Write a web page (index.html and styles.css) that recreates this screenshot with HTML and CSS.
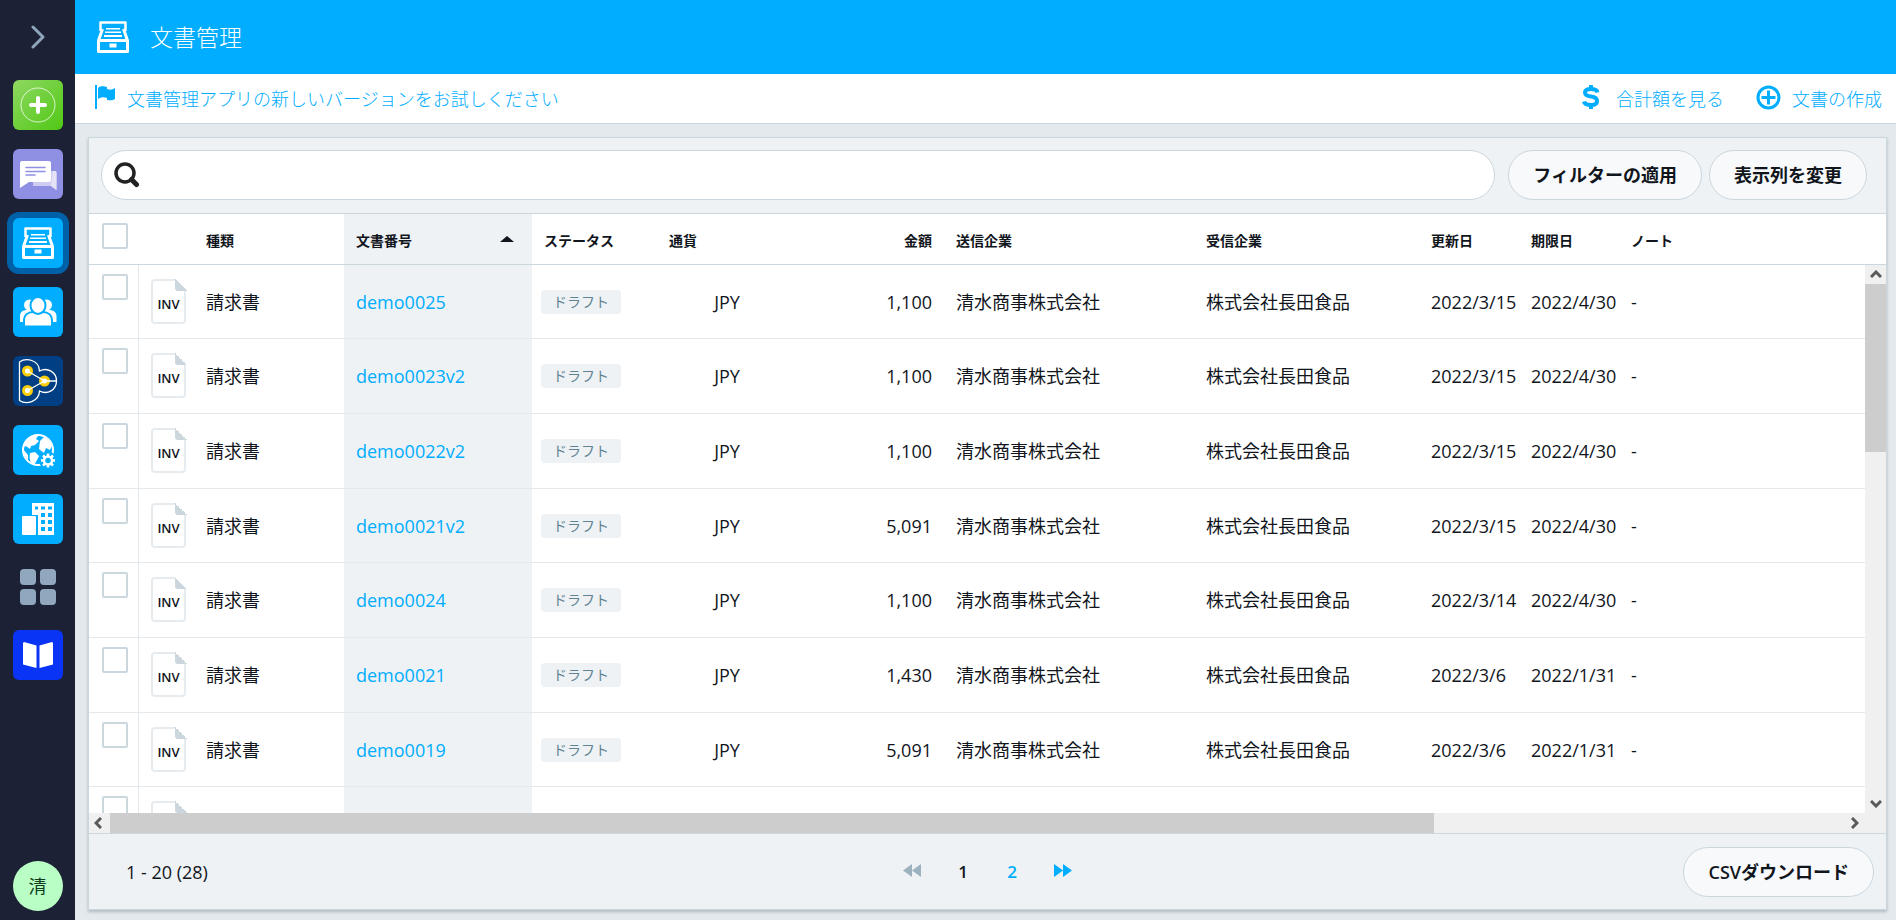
FILE: index.html
```html
<!DOCTYPE html>
<html lang="ja">
<head>
<meta charset="utf-8">
<title>文書管理</title>
<link rel="stylesheet" href="styles.css">
</head>
<body>
<svg class="defs" aria-hidden="true">
  <symbol id="drawer" viewBox="0 0 32 32">
    <path d="M3.500 10V1.500h25V10" fill="none" stroke="currentColor" stroke-width="2.500" stroke-linejoin="round"/>
    <path d="M1.500 19.500h29v11h-29zM1.500 19.500L5.500 8M30.500 19.500L26.500 8" fill="none" stroke="currentColor" stroke-width="3" stroke-linejoin="round"/>
    <path d="M9 7h14v1.500H9zM8 10.500h16V12H8zM7 14h18v2H7zM12.500 22.500h7v4h-7z" fill="currentColor"/>
  </symbol>
</svg>
<div class="app">
  <nav class="sidebar" aria-label="アプリ">
    <button class="expand" aria-label="メニューを開く"><svg width="16" height="24" viewBox="0 0 16 24"><path d="M3 2l10 10L3 22" fill="none" stroke="#8fa5bc" stroke-width="3" stroke-linecap="round" stroke-linejoin="round"/></svg></button>
    <a href="#" class="tile tile-create" aria-label="作成"><svg width="50" height="50" viewBox="0 0 50 50"><circle cx="25" cy="25" r="17" fill="none" stroke="#fff" stroke-opacity=".75"/><path d="M25 18v14M18 25h14" stroke="#fff" stroke-width="4" stroke-linecap="round"/></svg></a>
    <a href="#" class="tile tile-chat" aria-label="メッセージ"><svg width="50" height="50" viewBox="0 0 50 50"><path d="M20 22h22a1.500 1.500 0 0 1 1.500 1.500V41L38 37H20z" fill="#cfcdf1"/><path d="M40 22h2a1.500 1.500 0 0 1 1.500 1.500V41L38 37z" fill="#e6e3f7"/><path d="M9 12h27a2 2 0 0 1 2 2v17a2 2 0 0 1-2 2H16L7 39V14a2 2 0 0 1 2-2z" fill="#fff"/><path d="M13 18.500h19M13 22.500h19M13 26h9" stroke="#8f8fe3" stroke-width="1.500" stroke-linecap="round"/></svg></a>
    <a href="#" class="tile tile-blue tile-active" aria-label="文書管理" aria-current="page"><svg width="32" height="32"><use href="#drawer"/></svg></a>
    <a href="#" class="tile tile-blue" aria-label="ネットワーク"><svg width="50" height="50" viewBox="0 0 50 50"><g fill="#fff"><circle cx="16.500" cy="18" r="5.500"/><circle cx="33.500" cy="18" r="5.500"/><path d="M7 35v-6c0-4 3-6 7-6h22c4 0 7.500 2 7.500 6v6z"/></g><g fill="#fff" stroke="#00adff" stroke-width="2"><path d="M12 39.500c-1 0-1-1-1-2V34c0-6 4-9 9-9h10c5 0 9 3 9 9v3.500c0 1 0 2-1 2z"/><ellipse cx="25" cy="18.500" rx="7.500" ry="8.500"/></g></svg></a>
    <a href="#" class="tile tile-navy" aria-label="パートナー"><svg width="50" height="50" viewBox="0 0 50 50"><path d="M6.500 44.500V6C13 1.500 26 3.500 26.500 15c8-4 17 1 17 10s-9 14-17 10C26 46 13 49 6.500 44.500z" fill="none" stroke="#fff" stroke-width="1.300"/><g fill="#fff" stroke="#f9cf0b" stroke-width="3"><circle cx="14.500" cy="15" r="4"/><circle cx="14.500" cy="34.500" r="4"/><circle cx="31.500" cy="25" r="4"/></g><path d="M14.500 15L31.500 25l-17 9.500M31.500 25h12" fill="none" stroke="#fff" stroke-width="1.300"/></svg></a>
    <a href="#" class="tile tile-blue" aria-label="グローバル設定"><svg width="50" height="50" viewBox="0 0 50 50"><circle cx="25" cy="25" r="15" fill="none" stroke="#fff" stroke-width="2"/><path d="M10 22c1-6 6-11 12-12l3 1-2 3 3 2-4 4-4 1-1 3-4-3-2 1zM27 16l4-4c4 1 7 5 8 9l-2 4-4-2-2 5-5-4zM17 28l5-1 4 4-2 4-3 5c-4-2-5-6-4-12zM10 24l5 6v5c-3-3-5-6-5-11z" fill="#fff"/><circle cx="35" cy="35.500" r="9" fill="#00adff"/><g stroke="#fff"><circle cx="35" cy="35.500" r="4" fill="none" stroke-width="2.500"/><path d="M35 28.500v3M35 39.500v3M28 35.500h3M39 35.500h3M30 30.500l2 2M38 38.500l2 2M40 30.500l-2 2M32 38.500l-2 2" stroke-width="2.500"/></g></svg></a>
    <a href="#" class="tile tile-blue" aria-label="会社"><svg width="50" height="50" viewBox="0 0 50 50"><path d="M19 9h22v32H25V21h-6z" fill="#fff"/><rect x="9" y="22" width="14" height="19" rx="1" fill="#fff"/><path d="M22 12.500h3v3h-3zM28 12.500h4v3h-4zM35 12.500h4v3h-4zM28 19h4v4h-4zM35 19h4v4h-4zM28 26h4v4h-4zM35 26h4v4h-4zM28 33h4v4h-4zM35 33h4v4h-4z" fill="#00adff"/></svg></a>
    <a href="#" class="tile tile-apps" aria-label="すべてのアプリ"><svg width="36" height="36" viewBox="0 0 36 36" fill="#91a7bd"><rect width="16" height="16" rx="4"/><rect x="20" width="16" height="16" rx="4"/><rect y="20" width="16" height="16" rx="4"/><rect x="20" y="20" width="16" height="16" rx="4"/></svg></a>
    <a href="#" class="tile tile-book" aria-label="ガイド"><svg width="50" height="50" viewBox="0 0 50 50" fill="#fff"><path d="M11 12l12.500 3.500V38L10 34.500V13zM39 12l-12.500 3.500V38L40 34.500V13z"/></svg></a>
    <a href="#" class="avatar">清</a>
  </nav>

  <div class="main">
    <header class="titlebar">
      <svg width="32" height="32" aria-hidden="true"><use href="#drawer"/></svg>
      <h1>文書管理</h1>
    </header>

    <div class="actions">
      <a href="#" class="action action-flag"><svg width="22" height="26" viewBox="0 0 22 26" fill="currentColor"><path d="M1 1h2v24H1zM4 4c4-3 6-1 9-1v2c3 1 5 1 8-1v11c-3 2-5 1-8 1v-2c-3-1-6-1-9 1z"/></svg>文書管理アプリの新しいバージョンをお試しください</a>
      <a href="#" class="action action-total"><svg width="18" height="26" viewBox="0 0 18 26" fill="none" stroke="currentColor" stroke-width="4"><path d="M15.500 8.500C15 6 13 5 9 5S3 6 3 8.500 5 12 9 12.500s6 2 6 4.500-2 4-6 4-6.500-1-7-3.500M9 1v4M9 21v4"/></svg>合計額を見る</a>
      <a href="#" class="action"><svg width="25" height="25" viewBox="0 0 25 25" fill="none" stroke="currentColor" stroke-width="3"><circle cx="12.500" cy="12.500" r="10.500"/><path d="M12.500 5.500v14M5.500 12.500h14"/></svg>文書の作成</a>
    </div>

    <main class="content">
      <section class="card">
        <div class="filters">
          <label class="search">
            <svg width="26" height="26" viewBox="0 0 26 26" fill="none" stroke="#222" aria-hidden="true"><circle cx="11" cy="11" r="9" stroke-width="3.500"/><path d="M17.500 17.500l5 5" stroke-width="5" stroke-linecap="round"/></svg>
            <input type="search" aria-label="検索">
          </label>
          <div class="filter-buttons">
            <button class="pill">フィルターの適用</button>
            <button class="pill">表示列を変更</button>
          </div>
        </div>

        <div class="grid">
          <div class="table-wrap">
            <table>
              <colgroup><col class="c-check"><col class="c-icon"><col class="c-type"><col class="c-number"><col class="c-status"><col class="c-currency"><col class="c-amount"><col class="c-sender"><col class="c-receiver"><col class="c-date"><col class="c-date"><col></colgroup>
              <thead>
                <tr><th class="check"><input type="checkbox" aria-label="すべて選択"></th><th></th><th>種類</th><th class="sorted" aria-sort="ascending"><span class="sort">文書番号<i></i></span></th><th>ステータス</th><th>通貨</th><th class="amount">金額</th><th>送信企業</th><th>受信企業</th><th>更新日</th><th>期限日</th><th>ノート</th></tr>
              </thead>
              <tbody>
                <tr><td class="check"><input type="checkbox" aria-label="demo0025"></td><td class="icon"><span class="doc">INV</span></td><td>請求書</td><td class="sorted"><a href="#">demo0025</a></td><td class="status"><span class="badge">ドラフト</span></td><td class="currency">JPY</td><td class="amount">1,100</td><td>清水商事株式会社</td><td>株式会社長田食品</td><td>2022/3/15</td><td>2022/4/30</td><td>-</td></tr>
                <tr><td class="check"><input type="checkbox" aria-label="demo0023v2"></td><td class="icon"><span class="doc">INV</span></td><td>請求書</td><td class="sorted"><a href="#">demo0023v2</a></td><td class="status"><span class="badge">ドラフト</span></td><td class="currency">JPY</td><td class="amount">1,100</td><td>清水商事株式会社</td><td>株式会社長田食品</td><td>2022/3/15</td><td>2022/4/30</td><td>-</td></tr>
                <tr><td class="check"><input type="checkbox" aria-label="demo0022v2"></td><td class="icon"><span class="doc">INV</span></td><td>請求書</td><td class="sorted"><a href="#">demo0022v2</a></td><td class="status"><span class="badge">ドラフト</span></td><td class="currency">JPY</td><td class="amount">1,100</td><td>清水商事株式会社</td><td>株式会社長田食品</td><td>2022/3/15</td><td>2022/4/30</td><td>-</td></tr>
                <tr><td class="check"><input type="checkbox" aria-label="demo0021v2"></td><td class="icon"><span class="doc">INV</span></td><td>請求書</td><td class="sorted"><a href="#">demo0021v2</a></td><td class="status"><span class="badge">ドラフト</span></td><td class="currency">JPY</td><td class="amount">5,091</td><td>清水商事株式会社</td><td>株式会社長田食品</td><td>2022/3/15</td><td>2022/4/30</td><td>-</td></tr>
                <tr><td class="check"><input type="checkbox" aria-label="demo0024"></td><td class="icon"><span class="doc">INV</span></td><td>請求書</td><td class="sorted"><a href="#">demo0024</a></td><td class="status"><span class="badge">ドラフト</span></td><td class="currency">JPY</td><td class="amount">1,100</td><td>清水商事株式会社</td><td>株式会社長田食品</td><td>2022/3/14</td><td>2022/4/30</td><td>-</td></tr>
                <tr><td class="check"><input type="checkbox" aria-label="demo0021"></td><td class="icon"><span class="doc">INV</span></td><td>請求書</td><td class="sorted"><a href="#">demo0021</a></td><td class="status"><span class="badge">ドラフト</span></td><td class="currency">JPY</td><td class="amount">1,430</td><td>清水商事株式会社</td><td>株式会社長田食品</td><td>2022/3/6</td><td>2022/1/31</td><td>-</td></tr>
                <tr><td class="check"><input type="checkbox" aria-label="demo0019"></td><td class="icon"><span class="doc">INV</span></td><td>請求書</td><td class="sorted"><a href="#">demo0019</a></td><td class="status"><span class="badge">ドラフト</span></td><td class="currency">JPY</td><td class="amount">5,091</td><td>清水商事株式会社</td><td>株式会社長田食品</td><td>2022/3/6</td><td>2022/1/31</td><td>-</td></tr>
                <tr><td class="check"><input type="checkbox" aria-label="次の文書"></td><td class="icon"><span class="doc"></span></td><td></td><td class="sorted"></td><td></td><td></td><td></td><td></td><td></td><td></td><td></td><td></td></tr>
              </tbody>
            </table>
          </div>
          <div class="vbar" aria-hidden="true">
            <svg width="12" height="8" viewBox="0 0 12 8"><path d="M1 7l5-5 5 5"/></svg>
            <div class="vtrack"><div class="vthumb"></div></div>
            <svg width="12" height="8" viewBox="0 0 12 8"><path d="M1 1l5 5 5-5"/></svg>
          </div>
          <div class="hbar" aria-hidden="true">
            <svg width="8" height="12" viewBox="0 0 8 12"><path d="M7 1L2 6l5 5"/></svg>
            <div class="htrack"><div class="hthumb"></div></div>
            <svg width="8" height="12" viewBox="0 0 8 12"><path d="M1 1l5 5-5 5"/></svg>
          </div>
        </div>

        <footer class="footer">
          <span class="count">1 - 20 (28)</span>
          <nav class="pager" aria-label="ページ">
            <button class="jump" disabled aria-label="前へ"><svg width="18" height="13" viewBox="0 0 18 13" fill="#9cb2bf"><path d="M9 0v13L0 6.500zM18 0v13L9 6.500z"/></svg></button>
            <span class="page">1</span>
            <a href="#" class="page">2</a>
            <button class="jump" aria-label="次へ"><svg width="18" height="13" viewBox="0 0 18 13" fill="#00adff"><path d="M0 0v13l9-6.500zM9 0v13l9-6.500z"/></svg></button>
          </nav>
          <button class="pill">CSVダウンロード</button>
        </footer>
      </section>
    </main>
  </div>
</div>
</body>
</html>
```
FILE: styles.css
```css
* { box-sizing: border-box; }
body {
  margin: 0;
  font: 18px/24px "Open Sans", "Noto Sans CJK JP", sans-serif;
  color: #11151c;
}
a { color: #00adff; text-decoration: none; }
button { font: inherit; color: inherit; border: 0; background: none; padding: 0; cursor: pointer; }
svg { display: block; flex: none; }
.defs { position: absolute; width: 0; height: 0; }
.app { display: flex; height: 100vh; overflow: hidden; }

/* Sidebar */
.sidebar {
  flex: none;
  width: 75px;
  background: #1c2136;
  display: flex;
  flex-direction: column;
  align-items: center;
  gap: 19px;
  padding-bottom: 9px;
}
.expand { width: 50px; height: 61px; padding-top: 12px; display: grid; place-items: center; }
.tile { width: 50px; height: 50px; border-radius: 6px; display: grid; place-items: center; color: #fff; flex: none; }
.tile-create { background: linear-gradient(135deg, #8fd862, #50c814); }
.tile-chat { background: #8f8fe3; }
.tile-blue { background: #00adff; }
.tile-active { box-shadow: 0 0 0 6px #0061a8; }
.tile-navy { background: #003f83; }
.tile-apps { height: 48px; }
.tile-book { background: #0a34f5; }
.avatar {
  margin-top: auto;
  width: 50px;
  height: 50px;
  border-radius: 50%;
  background: #b9ffc5;
  color: #0d3b1b;
  display: grid;
  place-items: center;
}

/* Top bars */
.main { flex: 1; min-width: 0; display: flex; flex-direction: column; background: #e4e9ed; }
.titlebar {
  flex: none;
  height: 74px;
  background: #00adff;
  color: #fff;
  display: flex;
  align-items: center;
  gap: 21px;
  padding: 0 22px;
}
h1 { margin: 0; font-size: 23px; font-weight: 300; line-height: 32px; }
.actions {
  flex: none;
  height: 50px;
  background: #fff;
  border-bottom: 1px solid #cbd6dd;
  display: flex;
  align-items: center;
  gap: 32px;
  padding: 0 14px 0 19px;
}
.action { display: flex; align-items: center; gap: 11px; font-weight: 300; }
.action svg { margin-bottom: 3px; }
.action-flag { margin-right: auto; }
.action-total { gap: 16px; }

/* Card */
.content { flex: 1; min-height: 0; padding: 13px 9px 10px 13px; display: flex; }
.card {
  flex: 1;
  min-width: 0;
  display: flex;
  flex-direction: column;
  background: #eef2f5;
  border: 1px solid #cbd6dd;
  box-shadow: 0 2px 3px rgba(60, 80, 90, .3);
}
.filters { flex: none; display: flex; gap: 13px; padding: 12px 19px 13px 12px; }
.search {
  flex: 1;
  height: 50px;
  background: #fff;
  border: 1px solid #cbd6dd;
  border-radius: 25px;
  display: flex;
  align-items: center;
  gap: 12px;
  padding: 0 24px 0 12px;
}
.search input { flex: 1; border: 0; outline: 0; background: none; font: inherit; }
.filter-buttons { display: flex; gap: 7px; }
.pill {
  height: 50px;
  padding: 0 24px;
  border: 1px solid #cbd6dd;
  border-radius: 25px;
  background: #f7f9fb;
  font-weight: 600;
  white-space: nowrap;
}

/* Table */
.grid {
  flex: 1;
  min-height: 0;
  display: grid;
  grid-template: 52px minmax(0, 1fr) 20px / minmax(0, 1fr) 21px;
  border-bottom: 1px solid #cbd6dd;
}
.table-wrap { grid-area: 1 / 1 / 3 / 3; overflow: hidden; background: #fff; }
table { width: 100%; table-layout: fixed; border-collapse: separate; border-spacing: 0; }
.c-check { width: 50px; }
.c-icon { width: 55px; }
.c-type { width: 150px; }
.c-number { width: 188px; }
.c-status { width: 125px; }
.c-currency { width: 140px; }
.c-amount { width: 147px; }
.c-sender { width: 250px; }
.c-receiver { width: 225px; }
.c-date { width: 100px; }
th {
  height: 52px;
  padding: 3px 12px 0;
  border-top: 1px solid #cbd6dd;
  border-bottom: 1px solid #cbd6dd;
  font-size: 14px;
  font-weight: 600;
  text-align: left;
}
td { height: 75px; padding: 0 12px; border-bottom: 1px solid #e3e9ed; white-space: nowrap; }
tr:nth-child(3n+1) td { height: 74px; }
.check { padding: 9px 0 0 13px; vertical-align: top; }
td.check { border-right: 1px solid #e3e9ed; }
.check input {
  appearance: none;
  display: block;
  width: 26px;
  height: 26px;
  margin: 0;
  border: 2px solid #cbd6dd;
  border-radius: 2px;
  background: #fff;
}
.sorted { background: #eef2f5; }
.sort { display: flex; justify-content: space-between; align-items: center; }
.sort i { margin: 0 6px 4px 0; border: 7px solid transparent; border-top: 0; border-bottom: 6px solid #11151c; }
.icon { vertical-align: top; padding: 14px 0 0 12px; }
.doc {
  position: relative;
  display: grid;
  place-items: center;
  width: 35px;
  height: 45px;
  padding-top: 4px;
  border: 2px solid #e6ebef;
  border-radius: 4px;
  font-size: 13px;
  font-weight: 600;
}
.doc::after {
  content: "";
  position: absolute;
  top: -2px;
  right: -3px;
  width: 12px;
  height: 12px;
  border-bottom-left-radius: 3px;
  background: linear-gradient(to top right, #cbd6dd 50%, #fff 50%);
}
.status { padding-left: 9px; }
.badge {
  display: block;
  width: 80px;
  border-radius: 4px;
  background: #eef2f5;
  color: #5f8392;
  font-size: 14px;
  text-align: center;
}
.currency { text-align: center; }
.amount { text-align: right; }

/* Scrollbars */
.vbar, .hbar { background: #f0f0f0; display: flex; align-items: center; }
.vbar { grid-area: 2 / 2; flex-direction: column; padding: 5px 0; gap: 6px; }
.hbar { grid-area: 3 / 1 / 4 / 3; padding: 0 27px 0 5px; gap: 8px; }
.vbar path, .hbar path { fill: none; stroke: #5a5a5a; stroke-width: 3; }
.vtrack { flex: 1; width: 100%; }
.vthumb { height: 33%; background: #cdcdcd; }
.htrack { flex: 1; height: 100%; }
.hthumb { width: 76.4%; height: 100%; background: #cdcdcd; }

/* Footer */
.footer {
  flex: none;
  display: grid;
  grid-template-columns: 1fr auto 1fr;
  align-items: center;
  padding: 13px 12px 12px;
}
.count { padding-left: 25px; }
.footer .pill { justify-self: end; }
.pager { display: flex; align-items: center; gap: 35px; font-weight: 600; font-size: 17px; }
.page { width: 14px; text-align: center; }
.jump { padding-bottom: 4px; }
```
